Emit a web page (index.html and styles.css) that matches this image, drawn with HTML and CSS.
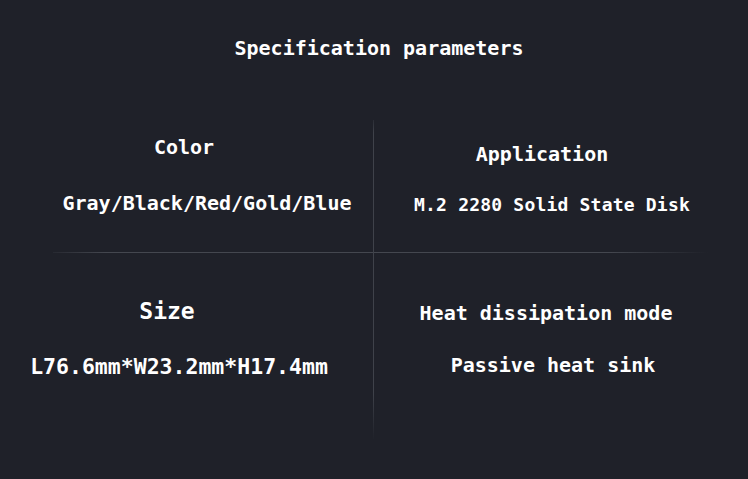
FILE: index.html
```html
<!DOCTYPE html>
<html lang="en">
<head>
<meta charset="utf-8">
<title>Specification parameters</title>
<link rel="stylesheet" href="styles.css">
</head>
<body>
<main class="page">
  <h1 class="title">Specification parameters</h1>
  <section class="specs">
    <div class="cell cell-color">
      <div class="label label-color">Color</div>
      <div class="value value-color">Gray/Black/Red/Gold/Blue</div>
    </div>
    <div class="cell cell-app">
      <div class="label label-app">Application</div>
      <div class="value value-app">M.2 2280 Solid State Disk</div>
    </div>
    <div class="hline"></div>
    <div class="vline"></div>
    <div class="cell cell-size">
      <div class="label label-size">Size</div>
      <div class="value value-size">L76.6mm*W23.2mm*H17.4mm</div>
    </div>
    <div class="cell cell-heat">
      <div class="label label-heat">Heat dissipation mode</div>
      <div class="value value-heat">Passive heat sink</div>
    </div>
  </section>
</main>
</body>
</html>
```
FILE: styles.css
```css
html, body {
  margin: 0;
  padding: 0;
}
body {
  background: #1f2129;
  width: 748px;
  height: 479px;
  overflow: hidden;
  color: #ffffff;
  font-family: "DejaVu Sans Mono", "Liberation Mono", monospace;
  font-weight: bold;
}
.page {
  display: flex;
  flex-direction: column;
}
.title {
  margin: 36px 0 0 0;
  font-size: 20px;
  line-height: 24px;
  font-weight: bold;
  text-align: center;
  padding-left: 10px;
}
.specs {
  margin-top: 60px;
  display: grid;
  grid-template-columns: 373px 1fr;
  grid-template-rows: 132px 1px 187px;
}
.cell {
  display: flex;
  flex-direction: column;
  text-align: center;
}
.cell-color { grid-column: 1; grid-row: 1; padding-top: 15px; }
.cell-app { grid-column: 2; grid-row: 1; padding-top: 22px; }
.cell-size { grid-column: 1; grid-row: 3; padding-top: 44px; }
.cell-heat { grid-column: 2; grid-row: 3; padding-top: 48px; }

.hline {
  grid-column: 1 / 3;
  grid-row: 2;
  margin: 0 40px 0 53px;
  background: linear-gradient(to right, rgba(70,73,82,0.2), #44474f 8%, #44474f 85%, rgba(70,73,82,0));
}
.vline {
  grid-column: 2;
  grid-row: 1 / 4;
  justify-self: start;
  width: 1px;
  background: linear-gradient(to bottom, rgba(70,73,82,0.3), #3f424a 4%, #3f424a 85%, rgba(70,73,82,0));
}

.label, .value {
  font-size: 20px;
  line-height: 24px;
  white-space: nowrap;
}
.label-color { padding-right: 5px; }
.value-color { margin-top: 32px; padding-left: 41px; }

.label-app { padding-right: 37px; }
.value-app { margin-top: 28px; font-size: 18px; line-height: 22px; padding-right: 17px; letter-spacing: 0.2px; }

.label-size { font-size: 23px; line-height: 28px; padding-right: 39px; }
.value-size { margin-top: 29px; font-size: 21.5px; line-height: 26px; padding-right: 15px; }

.label-heat { padding-right: 29px; }
.value-heat { margin-top: 28px; padding-right: 15px; }
```
